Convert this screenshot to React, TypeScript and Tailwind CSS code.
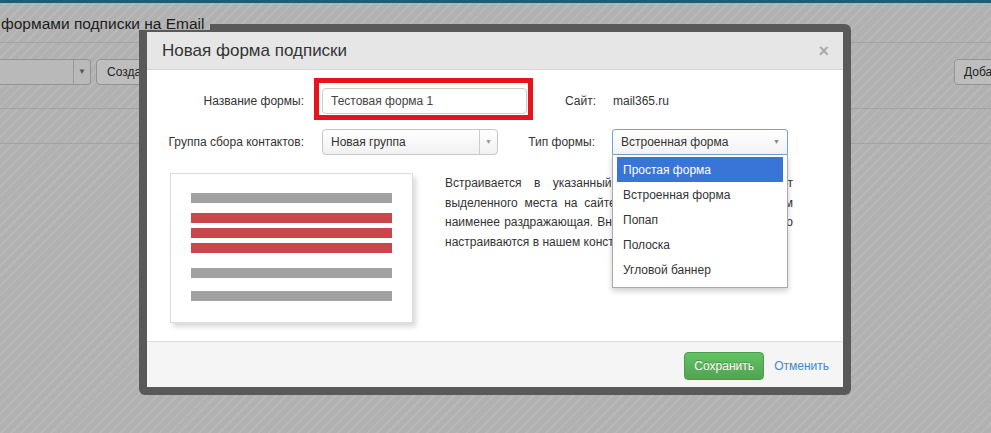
export default function App() {
  const options = ["Простая форма", "Встроенная форма", "Попап", "Полоска", "Угловой баннер"];
  const stripes =
    "bg-fixed bg-[repeating-linear-gradient(135deg,#b1b1b1_0px,#b1b1b1_5px,#b8b8b8_5px,#b8b8b8_7px)]";

  return (
    <div
      className={`relative h-[433px] w-[991px] overflow-hidden ${stripes} font-['Liberation_Sans',Arial,sans-serif] text-[12px] text-[#333]`}
    >
      {/* page behind the backdrop */}
      <div className="h-[3px] bg-[#1d5d7c]" />
      <div className="h-[39px] pl-[1px] pt-[12px]">
        <span
          className={`relative z-20 inline-block h-[15px] pr-[6px] text-[15.5px] leading-[18px] text-[#1c1c1c] ${stripes}`}
        >
          формами подписки на Email
        </span>
      </div>
      <div className="h-px bg-[#a3a3a3]" />
      <div className="flex h-[65px] items-start justify-between pt-[16px]">
        <div className="flex">
          <div className="flex h-[26px] w-[91px] rounded-r-[4px] border border-l-0 border-[#939393] bg-[#b9b9b9]">
            <div className="flex-1" />
            <div className="flex w-[17px] items-center justify-center border-l border-[#999] text-[8px] text-[#555]">
              ▼
            </div>
          </div>
          <div className="ml-[5px] flex h-[26px] w-[90px] items-center rounded-[4px] border border-[#939393] bg-[#bdbdbd] pl-[10px] text-[#222]">
            Создать
          </div>
        </div>
        <div className="-mr-[43px] flex h-[26px] w-[80px] items-center rounded-[4px] border border-[#939393] bg-[#bdbdbd] pl-[9px] text-[#222]">
          Добавить
        </div>
      </div>
      <div className="h-px bg-[#a3a3a3]" />
      <div className="h-[34px]" />
      <div className="h-px bg-[#a3a3a3]" />

      {/* modal */}
      <div className="absolute left-[139px] top-[24px] h-[371px] w-[712px] rounded-[6px] bg-[#595959] p-[8px]">
        <div className="flex h-full flex-col bg-white">
          <div className="flex h-[38px] items-center justify-between border-b border-[#d6d6d6] bg-[#e6e6e6] pl-[15px] pr-[14px]">
            <span className="text-[17px] text-[#333]">Новая форма подписки</span>
            <span className="text-[18px] font-bold leading-none text-[#ababab]">×</span>
          </div>

          <div className="flex-1 pt-[18px]">
            <div className="flex h-[26px] items-center">
              <div className="w-[157px] text-right">Название формы:</div>
              <div className="relative ml-[18px] w-[205px]">
                <div className="pointer-events-none absolute -bottom-[6px] -left-[8px] -right-[6px] -top-[10px] border-[5px] border-[#e8141b]" />
                <div className="flex h-[26px] items-center rounded-[4px] border border-[#ccc] px-[8px] text-[#444]">
                  Тестовая форма 1
                </div>
              </div>
              <div className="w-[69px] text-right">Сайт:</div>
              <div className="ml-[17px]">mail365.ru</div>
            </div>

            <div className="mt-[15px] flex h-[26px] items-center">
              <div className="w-[157px] text-right">Группа сбора контактов:</div>
              <div className="ml-[18px] flex h-[26px] w-[176px] rounded-[4px] border border-[#c6c6c6] bg-gradient-to-b from-white to-[#f1f1f1]">
                <div className="flex flex-1 items-center pl-[8px]">Новая группа</div>
                <div className="flex w-[18px] items-center justify-center border-l border-[#ccc] text-[7px] text-[#999]">
                  ▼
                </div>
              </div>
              <div className="w-[97px] text-right">Тип формы:</div>
              <div className="relative ml-[17px] w-[176px]">
                <div className="flex h-[26px] items-center justify-between rounded-t-[3px] border border-[#6fa3dc] bg-gradient-to-b from-white to-[#f3f3f3] pl-[8px] pr-[7px]">
                  <span>Встроенная форма</span>
                  <span className="text-[7px] text-[#888]">▼</span>
                </div>
                <div className="absolute left-0 top-[26px] z-10 w-[176px] border border-t-0 border-[#aaa] bg-white px-[4px] pb-[5px] pt-[2px] shadow-[0_3px_6px_rgba(0,0,0,0.2)]">
                  {options.map((o, i) => (
                    <div
                      key={o}
                      className={
                        i === 0
                          ? "flex h-[25px] items-center bg-[#3875d7] px-[6px] text-white"
                          : "flex h-[25px] items-center px-[6px] text-[#333]"
                      }
                    >
                      {o}
                    </div>
                  ))}
                </div>
              </div>
            </div>

            <div className="mt-[18px] flex items-start">
              <div className="ml-[23px] h-[150px] w-[243px] border border-[#dcdcdc] bg-white px-[20px] pt-[19px] shadow-[3px_4px_5px_rgba(0,0,0,0.15)]">
                <div className="h-[10px] bg-[#a1a1a1]" />
                <div className="mt-[10px] h-[10px] bg-[#c9474a]" />
                <div className="mt-[5px] h-[10px] bg-[#c9474a]" />
                <div className="mt-[5px] h-[10px] bg-[#c9474a]" />
                <div className="mt-[15px] h-[10px] bg-[#a1a1a1]" />
                <div className="mt-[13px] h-[10px] bg-[#a1a1a1]" />
              </div>
              <p className="ml-[32px] mt-[1px] w-[348px] text-justify text-[12px] leading-[19.5px] text-[#333]">
                Встраивается в указанный блок сайта и не требует выделенного места на сайте. Эта форма является самым
                наименее раздражающая. Внешний вид и поля формы легко настраиваются в нашем конструкторе.
              </p>
            </div>
          </div>

          <div className="flex h-[46px] items-center justify-end border-t border-[#dcdcdc] bg-[#f5f5f5] pr-[14px] pt-[2px]">
            <div className="flex h-[28px] w-[80px] items-center justify-center rounded-[4px] border border-[#4a9c4a] bg-gradient-to-b from-[#62c462] to-[#51a351] text-white [text-shadow:0_-1px_0_rgba(0,0,0,0.25)]">
              Сохранить
            </div>
            <span className="ml-[10px] text-[#3a8ad2]">Отменить</span>
          </div>
        </div>
      </div>
    </div>
  );
}
